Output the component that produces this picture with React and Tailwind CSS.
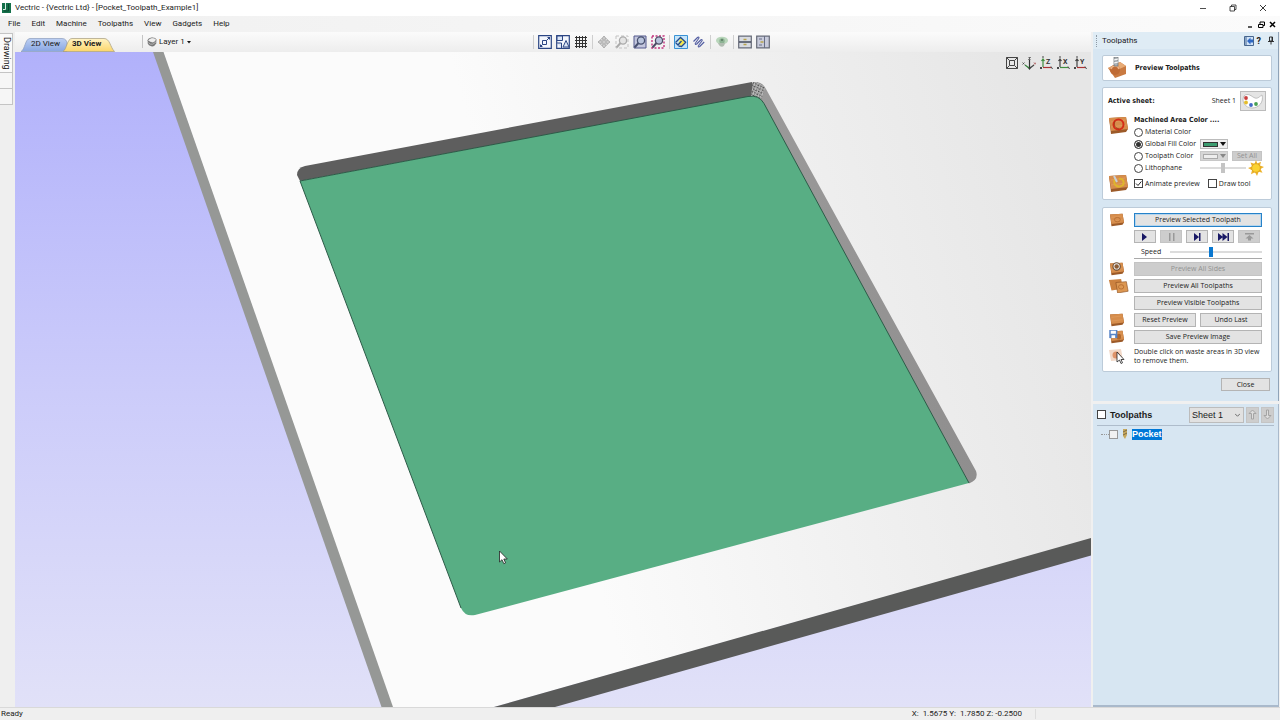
import React, { useState } from 'react'

const menus = ['File', 'Edit', 'Machine', 'Toolpaths', 'View', 'Gadgets', 'Help']

function Icon({ children, className = 'w-[14px] h-[14px]', box = '0 0 14 14' }) {
  return (
    <svg viewBox={box} className={`block shrink-0 ${className}`} fill="none" aria-hidden="true">
      {children}
    </svg>
  )
}

function TitleBar() {
  return (
    <header className="flex h-4 shrink-0 items-center bg-white pl-[2px] text-[8px]">
      <Icon className="w-[9px] h-[10px]" box="0 0 9 10">
        <path d="M0 0h9v10H0z" fill="#14704a" />
        <path d="M3.500 0v6.500H1" stroke="#d9eee4" strokeWidth="1" />
        <path d="M6.500 1v7H2" stroke="#0a4a30" />
      </Icon>
      <h1 className="ml-1">Vectric - {'{'}Vectric Ltd{'}'} - [Pocket_Toolpath_Example1]</h1>
      <div className="ml-auto flex items-center gap-[22px] pr-[13px]">
        <button aria-label="Minimize">
          <Icon className="w-2 h-2" box="0 0 8 8"><path d="M1 4.500h6" stroke="#222" strokeWidth=".8" /></Icon>
        </button>
        <button aria-label="Restore">
          <Icon className="w-2 h-2" box="0 0 8 8">
            <path d="M1 2.500h4.500V7H1zM2.500 2.500V1H7v4.500H5.500" stroke="#222" strokeWidth=".8" />
          </Icon>
        </button>
        <button aria-label="Close window">
          <Icon className="w-2 h-2" box="0 0 8 8"><path d="M1 1l6 6M7 1L1 7" stroke="#222" strokeWidth=".9" /></Icon>
        </button>
      </div>
    </header>
  )
}

function MenuBar() {
  return (
    <nav className="flex h-4 shrink-0 items-center bg-gradient-to-r from-[#f0f0f0] to-[#fbfbfb] pl-2 text-[8px]">
      <div className="flex gap-[11px]">
        {menus.map((m) => (
          <button key={m}>{m}</button>
        ))}
      </div>
      <div className="ml-auto flex items-center gap-1 pr-1">
        <button aria-label="Minimize document">
          <Icon className="w-[7px] h-[7px]" box="0 0 7 7"><path d="M1 6h4" stroke="#000" strokeWidth="1.300" /></Icon>
        </button>
        <button aria-label="Restore document">
          <Icon className="w-[7px] h-[7px]" box="0 0 7 7">
            <path d="M.5 3.500H5v3H.5zM2 3V1h4.500v3.500H5" stroke="#000" strokeWidth="1" />
          </Icon>
        </button>
        <button aria-label="Close document">
          <Icon className="w-[7px] h-[7px]" box="0 0 7 7"><path d="M1 1l5 5M6 1L1 6" stroke="#000" strokeWidth="1.500" /></Icon>
        </button>
      </div>
    </nav>
  )
}

function SideStrip() {
  return (
    <aside className="flex w-[15px] shrink-0 flex-col items-start bg-[#efefef] pt-[1px]">
      <button className="h-10 w-[13px] border border-l-0 border-[#c4c4c4] bg-[#fafafa] text-[9px] leading-[11px] [writing-mode:vertical-rl]">
        Drawing
      </button>
      <button aria-label="Modeling" className="h-4 w-[13px] border border-t-0 border-l-0 border-[#c4c4c4] bg-[#f6f6f6]" />
      <button aria-label="Clipart" className="h-4 w-[13px] border border-t-0 border-l-0 border-[#c4c4c4] bg-[#f6f6f6]" />
    </aside>
  )
}

function Magnifier({ stroke, extra, dim }) {
  return (
    <Icon>
      {extra}
      <circle cx="8" cy="5.500" r="3.600" fill={dim ? '#e4e4e4' : '#b9c4dc'} stroke={stroke} strokeWidth="1.300" />
      <path d="M5.500 8L1.500 12.500" stroke={stroke} strokeWidth="2" />
    </Icon>
  )
}

const toolGroups = [
  [
    ['Zoom to fit', (
      <Icon>
        <path d="M.7.7h12.600v12.600H.7z" fill="#f4f7fd" stroke="#2c4684" strokeWidth="1.200" />
        <path d="M4.500 5.500h4v4h-4zM8.500 5.500l3-3M4.500 9.500L2.500 11.500" stroke="#2c4684" />
        <path d="M12 2v3L9 2zM2 12V9l3 3z" fill="#2c4684" />
      </Icon>
    )],
    ['Toggle snapping', (
      <Icon>
        <path d="M.7.7h12.600v12.600H.7z" fill="#f4f7fd" stroke="#2c4684" strokeWidth="1.200" />
        <path d="M1 1h5.500v4.500H1zM7 12l3-6.500 3 6.500zM1 8h4.500v5" stroke="#2c4684" fill="#dbe6f7" />
      </Icon>
    )],
    ['Grid', (
      <Icon><path d="M2.500 1v12M5.500 1v12M8.500 1v12M11.500 1v12M1 2.500h12M1 5.500h12M1 8.500h12M1 11.500h12" stroke="#333" /></Icon>
    )],
  ],
  [
    ['Pan', (
      <Icon>
        <path d="M7 1l2.500 3h-1.500v2h2V4.500L13 7l-3 2.500V8H8v2h1.500L7 13l-2.500-3H6V8H4v1.500L1 7l3-2.500V6h2V4H4.500z" fill="#ccc" stroke="#999" strokeWidth=".7" />
      </Icon>
    )],
    ['Zoom window', <Magnifier stroke="#aaa" dim extra={<path d="M1 1h12v12H1z" stroke="#c3c3c3" strokeDasharray="3 2" />} />],
    ['Zoom drawing', <Magnifier stroke="#47506f" extra={<path d="M1 1h12v12H1z" fill="#c3c6dd" stroke="#53598c" />} />],
    ['Zoom selected', <Magnifier stroke="#4d4d66" extra={<path d="M1 1h12v12H1z" stroke="#c2347e" strokeWidth="1.400" strokeDasharray="2 1.500" />} />],
  ],
  [
    ['Shaded preview', (
      <Icon>
        <path d="M.5.5h13v13H.5z" fill="#c4e4f9" stroke="#3a93d6" />
        <path d="M6.500 2.500l5 4-4.500 5-2.500-3.500z" fill="#f5e94e" />
        <path d="M1.500 7.500l5-5 5.500 5M1.500 7.500L4 10l3.500-4M4.500 11l3 .5 4.500-4.500" stroke="#254b8c" strokeWidth="1.300" />
      </Icon>
    )],
    ['Toolpath lines', (
      <Icon>
        <path d="M1.500 6.500l4-4c1-1 2 0 1.200 1L3.500 8c-.8 1 .3 2 1.200 1l4-4c1-1 2 0 1.200 1L6.500 10.500c-.8 1 .3 2 1.200 1l4.500-4.500" stroke="#525da2" strokeWidth="1.100" />
      </Icon>
    )],
  ],
  [
    ['View both sides', (
      <Icon>
        <ellipse cx="7" cy="5.500" rx="6" ry="3.800" fill="#b9d6bb" />
        <circle cx="7" cy="6" r="2.700" fill="#8bb292" />
        <path d="M3 8c1 4 6 6 7 0z" fill="#b1bdb1" />
        <circle cx="7" cy="5" r="1" fill="#597860" />
      </Icon>
    )],
  ],
  [
    ['Tile horizontally', (
      <Icon>
        <path d="M.7 1.200h12.600v11.600H.7z" fill="#d8dbe2" stroke="#666b78" strokeWidth="1.200" />
        <path d="M1 7h12" stroke="#454b5c" strokeWidth="1.500" /><path d="M5.500 4.500h3M5.500 9.500h3" stroke="#b9a44c" strokeWidth="1.500" />
      </Icon>
    )],
    ['Tile vertically', (
      <Icon>
        <path d="M.7 1.200h12.600v11.600H.7z" fill="#c8cbdb" stroke="#666b78" strokeWidth="1.200" />
        <path d="M8.500 1v12M3 4h3M3 10h3" stroke="#686e86" /><path d="M4.500 7h3" stroke="#b9a44c" strokeWidth="1.500" />
      </Icon>
    )],
  ],
]

function ViewToolbar({ view, setView }) {
  return (
    <div className="flex h-5 shrink-0 items-end bg-gradient-to-b from-[#fbfbfb] to-[#ededed]">
      <div className="relative ml-[6px] flex h-4 w-[94px] items-center text-[8px]">
        <svg viewBox="0 0 94 14" className="absolute inset-x-0 bottom-0 h-[14px] w-full" aria-hidden="true">
          <defs>
            <linearGradient id="tabBlue" x2="0" y2="1"><stop stopColor="#bdd0f3" /><stop offset="1" stopColor="#89a6e2" /></linearGradient>
            <linearGradient id="tabGold" x2="0" y2="1"><stop stopColor="#fff3c4" /><stop offset="1" stopColor="#fbd66b" /></linearGradient>
          </defs>
          <path d="M0 13.500C4 12 4 .5 9 .5h32q5 0 5 6v7z" fill="url(#tabBlue)" stroke="#8b9cbd" strokeWidth=".7" />
          <path d="M42 13.500C46 11 46 .5 51 .5h32C89 .5 89 9 93.500 13.500z" fill="url(#tabGold)" stroke="#a59b7c" strokeWidth=".7" />
        </svg>
        <button className="relative ml-[10px] w-8 whitespace-nowrap text-left" onClick={() => setView('2d')} aria-pressed={view === '2d'}>2D View</button>
        <button className="relative ml-[9px] w-8 whitespace-nowrap text-left font-bold" onClick={() => setView('3d')} aria-pressed={view === '3d'}>3D View</button>
      </div>
      <button className="mb-1 ml-[27px] flex h-[13px] items-center gap-[2px] border-l border-[#c5c5c5] pl-1 text-[8px]">
        <Icon className="w-[10px] h-[10px]">
          <path d="M1 5q0-4 6-4t6 3v5q-3 5-7 4T1 9z" fill="#777" />
          <path d="M1 5q3-4 6-4 5 0 6 3-2 4-5 4T1 5z" fill="#eee" stroke="#666" strokeWidth=".7" />
          <path d="M2 8q3 3 6 2t5-4" stroke="#ccc" />
        </Icon>
        Layer 1
        <Icon className="w-1 h-1" box="0 0 4 4"><path d="M0 1h4L2 3.500z" fill="#111" /></Icon>
      </button>
      <div className="ml-auto mr-[321px] flex items-center gap-1 pb-[3px]">
        {toolGroups.map((group, i) => (
          <div key={i} className="flex gap-1 border-l border-[#cfcfcf] pl-1">
            {group.map(([name, icon]) => (
              <button key={name} aria-label={name}>{icon}</button>
            ))}
          </div>
        ))}
      </div>
    </div>
  )
}

function Axis({ letter, a, b }) {
  return (
    <Icon>
      <path d="M4 11V3M2.500 5L4 3l1.500 2" stroke={a} strokeWidth="1.200" />
      <path d="M4 11.500h8" stroke={b} strokeWidth="1.200" />
      <path d="M3 1h2M1 11l2 2M12 10.500l1.500 2.500M1 13l2-2" stroke="#333" strokeWidth=".9" />
      <text x="7" y="8" fontSize="7" fontWeight="bold" fill="#333">{letter}</text>
    </Icon>
  )
}

function Viewport() {
  return (
    <main className="relative min-h-0 flex-1 overflow-hidden">
      <svg viewBox="15 52 1076 655" preserveAspectRatio="xMidYMid slice" className="absolute inset-0 h-full w-full" role="img" aria-label="Pocket preview">
        <defs>
          <linearGradient id="sky" x2="0" y2="1">
            <stop stopColor="#b1b1fb" /><stop offset=".5" stopColor="#cbcbfa" /><stop offset="1" stopColor="#e1e1f8" />
          </linearGradient>
          <linearGradient id="board" gradientUnits="userSpaceOnUse" x1="560" y1="450" x2="1091" y2="300">
            <stop stopColor="#fbfbfb" /><stop offset=".55" stopColor="#efefef" /><stop offset="1" stopColor="#e6e6e6" />
          </linearGradient>
          <linearGradient id="wall" x2="1" y2="1"><stop stopColor="#9b9a9a" /><stop offset="1" stopColor="#8f8e8e" /></linearGradient>
          <pattern id="speckle" width="4" height="4" patternUnits="userSpaceOnUse" patternTransform="rotate(-20)">
            <path d="M0 0h4v4H0z" fill="#8b8b8b" />
            <path d="M0 1h1M2 0h1M3 2h1M1 3h1" stroke="#eee" />
            <path d="M1 1.500h1M3 3.500h1" stroke="#444" />
          </pattern>
        </defs>
        <path d="M15 52h1076v655H15z" fill="url(#sky)" />
        <path d="M163 52h928v487L494 707H392z" fill="url(#board)" />
        <path d="M153 52h10.500L393 707h-11.500z" fill="#969896" />
        <path d="M1091 538v17.500L555 707h-61z" fill="#595a59" />
        <path d="M300 181l-3-6q0-7 8-9L752 82l6 12-8 3z" fill="#5e5e5e" />
        <path d="M757 82q6 1 9 7l210 382q3 9-7 12.500L758 97z" fill="url(#wall)" />
        <path d="M753 82q8-1 12 6l-4 12-10-4z" fill="url(#speckle)" />
        <path d="M300 181L748 96.500q11-2 16 7L969 483 475 615q-10 2-14-7z" fill="#58ae84" />
        <path d="M461 608L300 181 748 96.500q11-2 16 7L969 483" fill="none" stroke="#2d5b48" strokeWidth="1" />
        <path d="M499.500 551v11l2.500-2.300 1.800 4 1.800-.8-1.800-3.900h3.500z" fill="#fff" stroke="#222" strokeWidth=".8" />
      </svg>
      <div className="absolute right-1 top-1 flex gap-[3px]">
        <button aria-label="Zoom to fit view">
          <Icon>
            <path d="M1.500 1.500h11v11h-11zM4.500 4.500h5v5h-5zM1.500 1.500l3 3M12.500 1.500l-3 3M1.500 12.500l3-3M12.500 12.500l-3-3" stroke="#444" />
          </Icon>
        </button>
        <button aria-label="Isometric view">
          <Icon>
            <path d="M7.500 13V4M6 11l1.500 2 1.500-2" stroke="#333" strokeWidth="1.200" />
            <path d="M7 12L3 9" stroke="#33803b" strokeWidth="1.200" /><path d="M8 12l4-3" stroke="#444" strokeWidth="1.200" />
            <path d="M6.500 1.500h2l-2 2h2M.5 6.500l2 2M2.500 6.500l-2 2" stroke="#444" strokeWidth=".8" />
            <path d="M12 6.500l2 2M14 6.500l-2 2" stroke="#a34141" strokeWidth=".8" />
          </Icon>
        </button>
        <button aria-label="View along Z"><Axis letter="Z" a="#3f8f3f" b="#a33" /></button>
        <button aria-label="View along X"><Axis letter="X" a="#444" b="#3f8f3f" /></button>
        <button aria-label="View along Y"><Axis letter="Y" a="#444" b="#a33" /></button>
      </div>
    </main>
  )
}

// slab of wood used by all the preview icons
function Wood({ children, className = 'w-[21px] h-[19px]' }) {
  return (
    <Icon className={className} box="0 0 21 19">
      <path d="M1 2l17-1 2 12-2 3-15 2z" fill="#9c5a28" />
      <path d="M1 2l17-1 2 12-17 2z" fill="#d68d4c" />
      <path d="M3 6l14-2M3 11l15-2" stroke="#e4a263" strokeWidth=".7" />
      {children}
    </Icon>
  )
}

const card = 'rounded-[2px] border border-[#bccbd9] bg-white'
const heading = "font-['DejaVu_Sans_Condensed','DejaVu_Sans',sans-serif] font-bold text-[7px]"
const btn = 'flex items-center justify-center border border-[#b4b4b4] bg-[#e3e3e3] whitespace-nowrap disabled:border-[#c4c4c4] disabled:bg-[#cdcdcd] disabled:text-[#929292]'
const range = 'appearance-none h-[2px] bg-[#dcdcdc] [&::-webkit-slider-thumb]:appearance-none [&::-webkit-slider-thumb]:h-[10px] [&::-webkit-slider-thumb]:w-[4px]'
const check = 'block h-[9px] w-[9px] shrink-0 appearance-none border border-[#444] bg-white'

function MachinedArea() {
  const [fill, setFill] = useState('Global Fill Color')
  const [animate, setAnimate] = useState(true)
  const [draw, setDraw] = useState(false)

  return (
    <section className={`${card} mt-[6px] pb-[6px] pl-[5px] pr-[5px] pt-[3px]`}>
      <div className="flex h-5 items-center">
        <h3 className={heading}>Active sheet:</h3>
        <span className="ml-auto mr-1">Sheet 1</span>
        <button aria-label="Material colors" className="flex h-5 w-[26px] items-center justify-center border border-[#bbb] bg-[#e4e4e4]">
          <Icon className="w-[22px] h-[16px]" box="0 0 22 16">
            <path d="M2 3C6-1 10 4 13 5s5-2 7-3c2 7-3 13-10 13C3 15-1 8 2 3z" fill="#fff" stroke="#aaa" strokeWidth=".7" />
            <circle cx="4" cy="5" r="1.900" fill="#c83f3f" /><circle cx="4" cy="9.500" r="1.900" fill="#e4bd2c" />
            <circle cx="9" cy="12" r="1.900" fill="#4169c8" /><circle cx="14" cy="11" r="1.900" fill="#49a153" />
          </Icon>
        </button>
      </div>
      <div className="mt-1 flex">
        <div className="w-[26px] shrink-0 pt-[1px]">
          <Wood>
            <ellipse cx="10.500" cy="8.500" rx="5" ry="5" stroke="#d52d18" strokeWidth="2" />
            <path d="M7 5c-2 5 1 7 4 8" stroke="#8c3513" strokeWidth=".6" />
          </Wood>
        </div>
        <div className="min-w-0 flex-1">
          <h3 className={`${heading} h-[11px] leading-[11px]`}>Machined Area Color ....</h3>
          {['Material Color', 'Global Fill Color', 'Toolpath Color', 'Lithophane'].map((name) => (
            <div key={name} className="flex h-3 items-center">
              <label className="flex w-[66px] shrink-0 items-center gap-[2px] whitespace-nowrap">
                <input
                  type="radio"
                  name="fill"
                  checked={fill === name}
                  onChange={() => setFill(name)}
                  className="h-[9px] w-[9px] shrink-0 appearance-none rounded-full border border-[#444] bg-white checked:bg-[#333] checked:shadow-[inset_0_0_0_1px_#fff]"
                />
                {name}
              </label>
              {name === 'Global Fill Color' && (
                <button aria-label="Choose fill color" className="flex h-[10px] w-7 items-center gap-[2px] border border-[#bbb] bg-[#eee] pl-[2px]">
                  <span className="h-[5px] w-[15px] border border-[#333] bg-[#3c9d70]" />
                  <Icon className="w-[6px] h-1" box="0 0 6 4"><path d="M0 0h6L3 4z" fill="#111" /></Icon>
                </button>
              )}
              {name === 'Toolpath Color' && (
                <>
                  <button disabled aria-label="Choose toolpath color" className="flex h-[10px] w-7 shrink-0 items-center gap-[2px] border border-[#c8c8c8] bg-[#d6d6d6] pl-[2px]">
                    <span className="h-[5px] w-[15px] border border-[#aaa] bg-[#eee]" />
                    <Icon className="w-[6px] h-1" box="0 0 6 4"><path d="M0 0h6L3 4z" fill="#888" /></Icon>
                  </button>
                  <button disabled className={`${btn} ml-1 h-[10px] w-[30px]`}>Set All</button>
                </>
              )}
              {name === 'Lithophane' && (
                <div className="flex items-center gap-[2px]">
                  <input type="range" disabled aria-label="Light" className={`${range} w-[46px] [&::-webkit-slider-thumb]:bg-[#c4c4c4]`} />
                  <Icon className="w-4 h-4" box="0 0 16 16">
                    <path d="M8 0l1.300 3.500L13 1.800l-1 3.600 4 1.600-3.500 2 2 3.800-3.800-1L9 16l-2-3.800-4 2 1-4L0 8l4-1.500L2.500 2.500l4 1.200z" fill="#edb32c" />
                    <circle cx="8" cy="8" r="4.300" fill="#fbd231" stroke="#d79c1c" strokeWidth=".7" />
                  </Icon>
                </div>
              )}
            </div>
          ))}
        </div>
      </div>
      <div className="flex items-center">
        <div className="w-[26px] shrink-0">
          <Wood>
            <path d="M7 5c-3 7 4 9 8 6 2-4-1-7-4-6" stroke="#dfb52d" strokeWidth="2" />
            <path d="M6 2l3 6" stroke="#c8d0d8" strokeWidth="2" />
          </Wood>
        </div>
        <label className="flex items-center gap-[2px] whitespace-nowrap">
          <span className="relative">
            <input type="checkbox" checked={animate} onChange={(e) => setAnimate(e.target.checked)} className={check} />
            {animate && (
              <svg viewBox="0 0 9 9" className="pointer-events-none absolute inset-0 h-[9px] w-[9px]" fill="none" aria-hidden="true">
                <path d="M2 4.500l2 2L7.300 2.500" stroke="#222" />
              </svg>
            )}
          </span>
          Animate preview
        </label>
        <label className="ml-2 flex items-center gap-[2px] whitespace-nowrap">
          <input type="checkbox" checked={draw} onChange={(e) => setDraw(e.target.checked)} className={check} />
          Draw tool
        </label>
      </div>
    </section>
  )
}

function Row({ icon, children, className = 'h-[14px]' }) {
  return (
    <div className={`flex items-stretch ${className}`}>
      <div className="flex w-[26px] shrink-0 items-center overflow-visible">{icon}</div>
      <div className="flex min-w-0 flex-1 items-stretch gap-1">{children}</div>
    </div>
  )
}

const playback = [
  ['Play', 'M2 0l5 4-5 4z', false],
  ['Pause', 'M3 0h1.500v8H3zM7 0h1.500v8H7z', true],
  ['Step', 'M2 0l5 4-5 4zM7 0h1.500v8H7z', false],
  ['Skip to end', 'M0 0l5 4-5 4zM4.500 0l5 4-5 4zM9.500 0H11v8H9.500z', false],
  ['Run to retract', 'M1 0h9v1.500H1zM5.500 2l4 3.500H7V7.500H4V5.500H1.500z', true],
]

function PreviewControls() {
  const [speed, setSpeed] = useState(44)
  const slab = 'w-[18px] h-[14px]'

  return (
    <section className={`${card} mt-[7px] flex flex-col gap-[3px] pb-[6px] pl-[5px] pr-[9px] pt-[5px]`}>
      <Row icon={<Wood className={slab}><ellipse cx="11" cy="9" rx="4" ry="3" stroke="#b0672f" /></Wood>}>
        <button className="flex flex-1 items-center justify-center border border-[#2682c9] bg-[#e3e3e3] shadow-[inset_0_0_0_1px_#b5d5ed]">Preview Selected Toolpath</button>
      </Row>
      <Row className="h-[13px]">
        {playback.map(([name, d, off]) => (
          <button key={name} aria-label={name} disabled={off} className={`${btn} w-[22px]`}>
            <Icon className="w-[11px] h-2" box="0 0 11 8"><path d={d} fill={off ? '#999' : '#191966'} /></Icon>
          </button>
        ))}
      </Row>
      <Row className="h-[13px]">
        <label className="flex flex-1 items-center justify-between border-b border-[#a9a9a9] pb-[1px] pl-[7px]">
          Speed
          <input
            type="range"
            value={speed}
            onChange={(e) => setSpeed(e.target.value)}
            className={`${range} w-[92px] [&::-webkit-slider-thumb]:bg-[#0a78d0]`}
          />
        </label>
      </Row>
      <Row icon={<Wood className={slab}><circle cx="10" cy="6" r="5" fill="#eee" stroke="#6c4c32" strokeWidth="1.500" /><circle cx="10" cy="6" r="3" fill="#8b5c36" /></Wood>}>
        <button disabled className={`${btn} flex-1`}>Preview All Sides</button>
      </Row>
      <Row
        icon={
          <Icon className="w-[21px] h-[14px]" box="0 0 24 16">
            <path d="M1 1l14-1 2 11-13 2z" fill="#cc8240" /><path d="M9 4l12-1 2 11-12 2z" fill="#dc9752" stroke="#8a4d20" strokeWidth=".7" />
            <ellipse cx="15" cy="9" rx="3" ry="2.500" stroke="#b66b2e" />
          </Icon>
        }
      >
        <button className={`${btn} flex-1`}>Preview All Toolpaths</button>
      </Row>
      <Row><button className={`${btn} flex-1`}>Preview Visible Toolpaths</button></Row>
      <Row icon={<Wood className={slab} />}>
        <button className={`${btn} flex-1`}>Reset Preview</button>
        <button className={`${btn} flex-1`}>Undo Last</button>
      </Row>
      <Row
        icon={
          <Wood className={slab}>
            <ellipse cx="13" cy="9" rx="3" ry="4" fill="#b0682e" />
            <path d="M0 0h11v11H0z" fill="#5784c7" /><path d="M2 1h7v4H2zM3 7h5v4H3z" fill="#fff" />
          </Wood>
        }
      >
        <button className={`${btn} flex-1`}>Save Preview Image</button>
      </Row>
      <Row
        className="h-[18px]"
        icon={
          <Icon className="w-[18px] h-4" box="0 0 18 16">
            <path d="M1 2l12-1 2 11-12 1z" fill="#f2d9c8" /><circle cx="8" cy="7" r="3.500" fill="#df946a" />
            <path d="M9 4v10l2.500-2 1.500 3.500 1.500-.7L13 11.500h3z" fill="#fff" stroke="#222" strokeWidth=".8" />
          </Icon>
        }
      >
        <p className="whitespace-nowrap leading-[9px]">Double click on waste areas in 3D view<br />to remove them.</p>
      </Row>
    </section>
  )
}

function ToolpathsPanel() {
  return (
    <section className="border-r border-[#8fa3b8] bg-[#d7e6f2] pb-[10px] text-[7px]">
      <div className="flex h-[17px] items-center bg-[#dfecf5] pl-[3px] pr-1 font-['Roboto',sans-serif] text-[8px]">
        <span className="mr-[5px] h-3 border-l border-dotted border-[#8e9aa5]" />
        <h2>Toolpaths</h2>
        <div className="ml-auto flex items-center gap-[3px]">
          <button aria-label="Switch layout">
            <Icon className="w-[10px] h-[10px]" box="0 0 10 10">
              <path d="M.5.5h9v9h-9z" fill="#cfe2f7" stroke="#47668f" /><path d="M3 5l3.500-3.500V3.500H9v3H6.500v2z" fill="#2f68c4" /><path d="M2 1v8" stroke="#47668f" />
            </Icon>
          </button>
          <button aria-label="Help" className="text-[9px] font-bold leading-3">?</button>
          <button aria-label="Pin panel" className="ml-1">
            <Icon className="w-[6px] h-[9px]" box="0 0 6 9"><path d="M1.500 1h3v4h-3zM0 5.500h6M3 5.500V8.500M4 1v4" stroke="#222" strokeWidth=".9" /></Icon>
          </button>
        </div>
      </div>
      <div className="pl-[9px] pr-[6px] pt-[6px]">
        <div className={`${card} flex h-[26px] items-center pl-[3px]`}>
          <Icon className="w-[22px] h-[22px]" box="0 0 22 22">
            <path d="M2 11l12-6 6 4v8l-11 4z" fill="#c97a41" /><path d="M2 11l12-6 6 4-11 5z" fill="#e8ab75" />
            <circle cx="9" cy="13" r="5" fill="#bf6b35" /><path d="M5 12c1-4 7-4 8 0" stroke="#ecb386" strokeWidth="1.500" />
            <path d="M8 0h4v9H8z" fill="#adb3b8" stroke="#6b7074" strokeWidth=".7" /><path d="M8 3l4-1M8 6l4-1" stroke="#fff" />
          </Icon>
          <h2 className={`${heading} ml-[7px]`}>Preview Toolpaths</h2>
        </div>
        <MachinedArea />
        <PreviewControls />
        <div className="mt-[6px] flex justify-end pr-[2px]">
          <button className={`${btn} h-[13px] w-[49px]`}>Close</button>
        </div>
      </div>
    </section>
  )
}

function ToolpathTree() {
  return (
    <section className="mt-[3px] flex-1 border-b-2 border-r border-[#a9b9cb] bg-[#d7e6f2] font-['Liberation_Sans',sans-serif] text-[9px]">
      <div className="mx-1 flex h-[22px] items-center border-b border-[#aebccb]">
        <label className="flex items-center gap-1 font-bold">
          <input type="checkbox" className={check} />
          Toolpaths
        </label>
        <div className="relative ml-auto mr-[2px]">
          <select aria-label="Sheet" className="h-4 w-[55px] appearance-none border border-[#bcbcbc] bg-[#e1e1e1] pl-[2px] text-[9px]">
            <option>Sheet 1</option>
          </select>
          <Icon className="pointer-events-none absolute right-1 top-[6px] w-[5px] h-1" box="0 0 6 4"><path d="M0 .5l3 3 3-3" stroke="#555" /></Icon>
        </div>
        <button disabled aria-label="Move up" className={`${btn} mr-[2px] h-4 w-[13px]`}>
          <Icon className="w-[9px] h-[11px]" box="0 0 9 11"><path d="M4.500 1L8 4.500H5.500V10h-2V4.500H1z" fill="#ddd" stroke="#a4a4a4" /></Icon>
        </button>
        <button disabled aria-label="Move down" className={`${btn} h-4 w-[13px]`}>
          <Icon className="w-[9px] h-[11px]" box="0 0 9 11"><path d="M4.500 10L8 6.500H5.500V1h-2v5.500H1z" fill="#ddd" stroke="#a4a4a4" /></Icon>
        </button>
      </div>
      <label className="ml-2 mt-[2px] flex h-3 items-center font-bold">
        <span className="w-2 border-t border-dotted border-[#999]" />
        <input type="checkbox" className="h-[9px] w-[9px] appearance-none border border-[#999] bg-[#f1f1f1]" />
        <Icon className="ml-1 w-[6px] h-[10px]" box="0 0 6 10">
          <path d="M1 0h4v6L3 10 1 7z" fill="#c7a95d" /><path d="M1 3l4-2M1 6l4-2" stroke="#7b6a48" />
        </Icon>
        <span className="ml-1 bg-[#0078d7] leading-[11px] text-white">Pocket</span>
      </label>
    </section>
  )
}

export default function App() {
  const [view, setView] = useState('3d')

  return (
    <div className="flex h-screen flex-col overflow-hidden bg-[#f0f0f0] font-['Roboto',sans-serif] text-[8px] leading-[10px] text-[#1b1b1b]">
      <TitleBar />
      <MenuBar />
      <div className="flex min-h-0 flex-1">
        <SideStrip />
        <div className="flex min-w-0 flex-1 flex-col">
          <ViewToolbar view={view} setView={setView} />
          <Viewport />
        </div>
        <aside className="ml-[2px] mr-[1px] flex w-[186px] shrink-0 flex-col font-['Open_Sans','Noto_Sans',sans-serif]">
          <ToolpathsPanel />
          <ToolpathTree />
        </aside>
      </div>
      <footer className="flex h-[13px] shrink-0 items-center border-t border-[#d9d9d9] bg-[#efefef] pl-[1px] text-[8px]">
        <span>Ready</span>
        <span className="ml-auto mr-[244px] border-r border-[#ddd] pr-[13px] whitespace-pre">X:  1.5675 Y:  1.7850 Z: -0.2500</span>
      </footer>
    </div>
  )
}
